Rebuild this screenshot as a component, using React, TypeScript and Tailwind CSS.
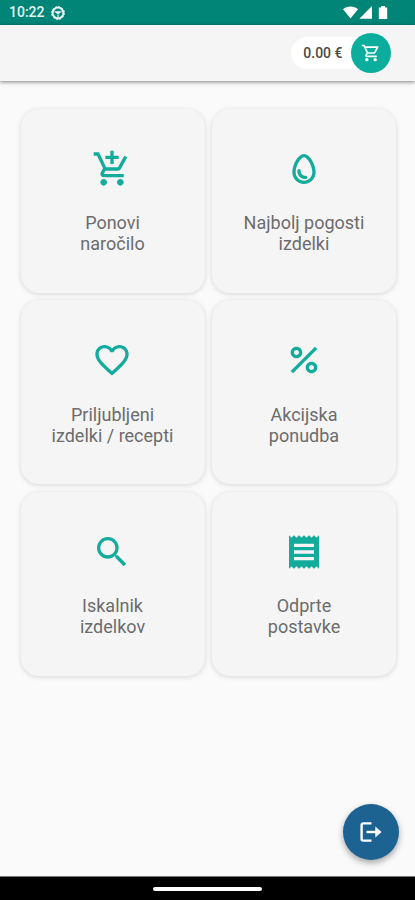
import React from 'react';
import {
  MdAddShoppingCart,
  MdFavoriteBorder,
  MdOutlineEgg,
  MdOutlineShoppingCart,
  MdPercent,
  MdReceipt,
  MdSearch,
} from 'react-icons/md';

interface MenuCardProps {
  icon: React.ReactNode;
  lines: string[];
}

const menuItems: MenuCardProps[] = [
  { icon: <MdAddShoppingCart />, lines: ['Ponovi', 'naročilo'] },
  { icon: <MdOutlineEgg />, lines: ['Najbolj pogosti', 'izdelki'] },
  { icon: <MdFavoriteBorder />, lines: ['Priljubljeni', 'izdelki / recepti'] },
  { icon: <MdPercent />, lines: ['Akcijska', 'ponudba'] },
  { icon: <MdSearch />, lines: ['Iskalnik', 'izdelkov'] },
  { icon: <MdReceipt />, lines: ['Odprte', 'postavke'] },
];

const MenuCard = ({ icon, lines }: MenuCardProps) => (
  <button className="flex h-[184px] flex-col items-center rounded-[18px] bg-[#f5f5f5] pt-[40px] shadow-[0_1px_5px_rgba(0,0,0,0.15)]">
    <span className="pr-px text-[40px] text-[#12ab9c]">{icon}</span>
    <span className="mt-[23.5px] flex flex-col text-center text-[18px] leading-[21px] text-[#6c6c6c]">
      {lines.map((line) => (
        <span key={line}>{line}</span>
      ))}
    </span>
  </button>
);

const StatusBar = () => (
  <div className="flex h-[25px] items-center justify-between bg-[#008577] pr-[27px] pl-[9px] text-[#e6f4f2]">
    <div className="flex items-center gap-[6px]">
      <span className="text-[14px] font-medium">10:22</span>
      <svg width="14" height="14" viewBox="0 0 14 14" fill="none" stroke="currentColor">
        <circle cx="7" cy="7" r="5.4" strokeWidth="2" />
        <circle cx="7" cy="7" r="6.4" strokeWidth="1" strokeDasharray="1.8 1.5" />
        <path d="M3.5 5.8h7M7 6v6M5 5.8l2 2.2 2-2.2" strokeWidth="1.2" />
      </svg>
    </div>
    <svg width="45" height="14" viewBox="0 0 45 14" fill="#fff">
      <path d="M0 3.2C4-.3 11-.3 15 3.2L7.5 12.5z" />
      <path d="M29 0v12.7H16.3z" />
      <path d="M38 0h4v1.5h2.2V13h-8.4V1.5H38z" />
    </svg>
  </div>
);

const Header = () => (
  <header className="relative flex h-[56px] items-center justify-end bg-[#f5f5f5] pr-[24px] shadow-[0_1px_4px_rgba(0,0,0,0.5)]">
    <div className="flex h-[32px] items-center rounded-full bg-white pl-[12px]">
      <span className="mr-[8.5px] text-[14px] font-medium text-[#484848]">0.00 €</span>
      <button className="flex size-[40px] items-center justify-center rounded-full bg-[#0bae9d] text-white">
        <MdOutlineShoppingCart size={20} />
      </button>
    </div>
  </header>
);

const App = () => (
  <div className="relative flex h-[900px] w-[415px] flex-col bg-[#fafafa] font-[Roboto,sans-serif]">
    <StatusBar />
    <Header />
    <main className="flex-1 px-[20.5px] pt-[27.5px]">
      <div className="grid grid-cols-[184px_184px] gap-[7.5px]">
        {menuItems.map((item) => (
          <MenuCard key={item.lines[0]} {...item} />
        ))}
      </div>
    </main>
    <button className="absolute right-[16px] bottom-[40px] flex size-[56px] items-center justify-center rounded-full bg-[#1d6391] text-white shadow-[0_3px_6px_rgba(0,0,0,0.35)]">
      <svg width="22" height="20" viewBox="0 0 22 20" fill="none" stroke="currentColor">
        <path d="M11.5 1.4H3.2Q1.6 1.4 1.6 3v14q0 1.6 1.6 1.6h8.3" strokeWidth="2.4" />
        <path d="M6.5 10h10" strokeWidth="2.4" />
        <path d="M15.3 4.6 21.5 10l-6.2 5.4z" fill="currentColor" stroke="none" />
      </svg>
    </button>
    <nav className="flex h-[24px] items-center justify-center border-t border-[#777] bg-black">
      <div className="h-[4px] w-[109px] rounded-full bg-white" />
    </nav>
  </div>
);

export default App;
